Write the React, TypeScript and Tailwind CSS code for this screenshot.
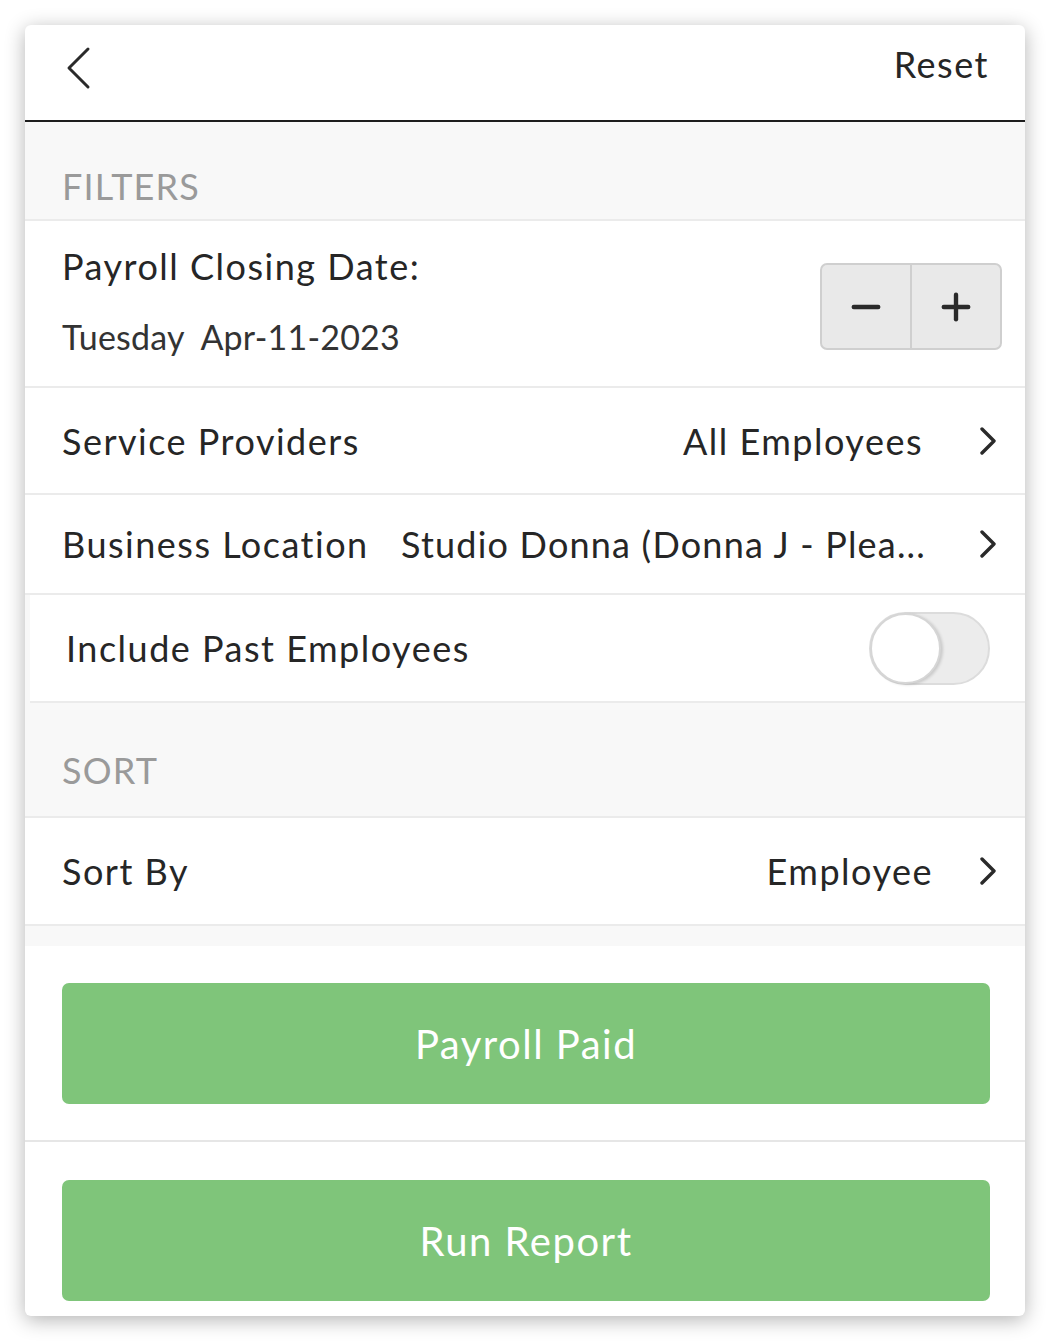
import { Minus, Plus } from "lucide-react";

const font = { fontFamily: "Lato, 'Open Sans', sans-serif" };

const Chevron = () => (
    <svg width="18" height="28" viewBox="0 0 18 28" className="shrink-0">
        <polyline points="3,2 15,14 3,26" fill="none" stroke="#2a2a2a" strokeWidth="3.4" strokeLinecap="round" strokeLinejoin="round" />
    </svg>
);

const SectionHeader = ({ title, h, pb }: { title: string; h: string; pb: string }) => (
    <div className={`${h} ${pb} bg-[#f8f8f8] flex items-end px-[37px] border-b-2 border-[#ebebeb]`}>
        <span className="text-[36px] text-[#9a9a9a] tracking-[1.2px]">{title}</span>
    </div>
);

const LinkRow = ({ label, value, h, gap }: { label: string; value: string; h: string; gap: string }) => (
    <div className={`${h} flex items-center pl-[37px] pr-[28px] border-b-2 border-[#ebebeb] bg-white`}>
        <span className="text-[36px] tracking-[1.5px] text-[#262626] whitespace-nowrap">{label}</span>
        <span className={`flex-1 text-right text-[36px] text-[#262626] whitespace-nowrap ${gap}`}>
            {value}
        </span>
        <Chevron />
    </div>
);

export default function App() {
    return (
        <div className="min-h-[1341px] bg-white p-[25px]" style={font}>
            <div className="w-[1000px] bg-white rounded-[6px] shadow-[0_4px_20px_rgba(0,0,0,0.3)] overflow-hidden">
                {/* header */}
                <div className="h-[97px] flex items-center justify-between pl-[41px] pr-[36px] border-b-2 border-[#1e1e1e]">
                    <svg width="26" height="44" viewBox="0 0 26 44" className="-mt-[10px]">
                        <polyline points="22,3 3,22 22,41" fill="none" stroke="#2a2a2a" strokeWidth="3" strokeLinecap="round" strokeLinejoin="round" />
                    </svg>
                    <span className="text-[36px] tracking-[1.5px] text-[#262626] -mt-[18px]">Reset</span>
                </div>

                <SectionHeader title="FILTERS" h="h-[99px]" pb="pb-[6px]" />

                {/* closing date */}
                <div className="h-[167px] flex items-center justify-between pl-[37px] pr-[23px] border-b-2 border-[#ebebeb]">
                    <div className="flex flex-col gap-[18px] -mt-[6px]">
                        <span className="text-[36px] tracking-[1.5px] text-[#262626]">Payroll Closing Date:</span>
                        <span className="text-[34px] tracking-[0.2px] text-[#333]">
                            Tuesday&nbsp;&nbsp;Apr-11-2023
                        </span>
                    </div>
                    <div className="mt-[6px] flex w-[182px] h-[87px] rounded-[7px] border-2 border-[#cfcfcf] bg-[#e9e9e9] overflow-hidden">
                        <div className="flex-1 flex items-center justify-center border-r-2 border-[#cfcfcf]">
                            <Minus size={42} strokeWidth={2.5} className="text-[#2a2a2a]" />
                        </div>
                        <div className="flex-1 flex items-center justify-center">
                            <Plus size={42} strokeWidth={2.5} className="text-[#2a2a2a]" />
                        </div>
                    </div>
                </div>

                <LinkRow label="Service Providers" value="All Employees" h="h-[107px]" gap="mr-[56px] tracking-[1.5px]" />
                <LinkRow
                    label="Business Location"
                    value="Studio Donna (Donna J - Plea..."
                    h="h-[100px]"
                    gap="mr-[53px] tracking-[1.2px]"
                />

                {/* toggle row */}
                <div className="bg-[#f8f8f8] pl-[5px]">
                    <div className="h-[108px] flex items-center justify-between pl-[36px] pr-[35px] border-b-2 border-[#ebebeb] bg-white">
                        <span className="text-[36px] tracking-[1.5px] text-[#262626]">Include Past Employees</span>
                        <div className="w-[121px] h-[73px] rounded-full bg-[#ececec] border-2 border-[#dcdcdc] relative">
                            <div className="absolute left-[-1px] top-[-1px] w-[71px] h-[71px] rounded-full bg-white border-2 border-[#d6d6d6] shadow-[2px_1px_3px_rgba(0,0,0,0.15)]" />
                        </div>
                    </div>
                </div>

                <SectionHeader title="SORT" h="h-[115px]" pb="pb-[19px]" />

                <LinkRow label="Sort By" value="Employee" h="h-[108px]" gap="mr-[46px] tracking-[1.5px]" />

                <div className="h-[20px] bg-[#f8f8f8]" />

                {/* buttons */}
                <div className="pl-[37px] pr-[35px] pt-[37px] pb-[36px] border-b-2 border-[#e6e6e6]">
                    <button className="w-full h-[121px] rounded-[7px] bg-[#7fc57a] text-white text-[40px] tracking-[1.5px]">
                        Payroll Paid
                    </button>
                </div>
                <div className="pl-[37px] pr-[35px] pt-[38px] pb-[15px]">
                    <button className="w-full h-[121px] rounded-[7px] bg-[#7fc57a] text-white text-[40px] tracking-[1.5px]">
                        Run Report
                    </button>
                </div>
            </div>
        </div>
    );
}
